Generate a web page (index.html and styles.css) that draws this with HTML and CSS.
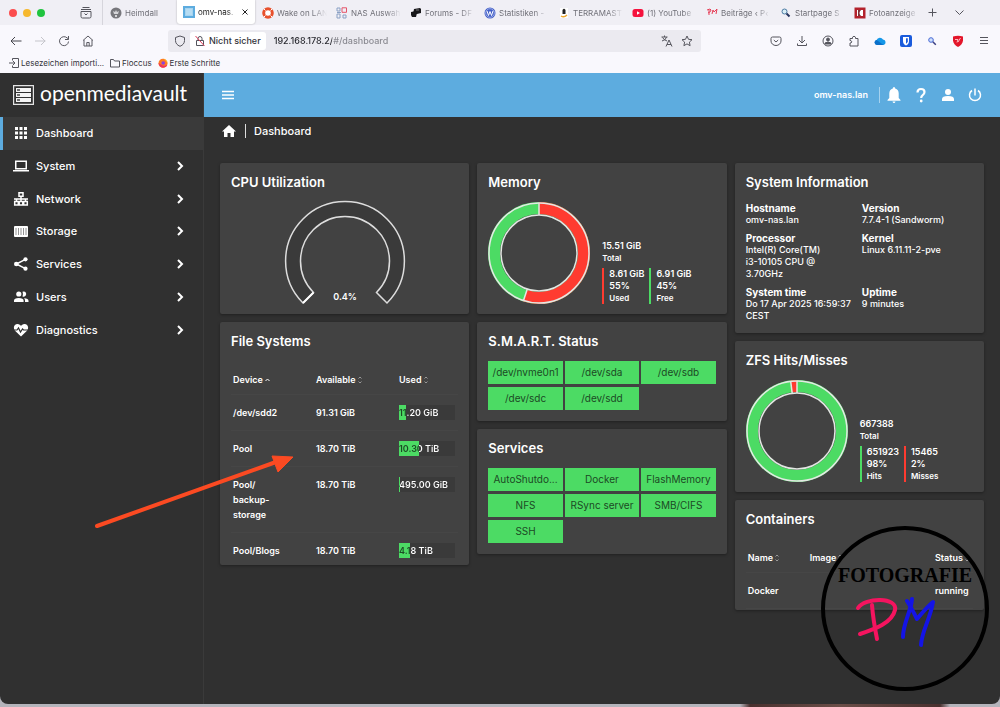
FILE: index.html
```html
<!DOCTYPE html>
<html lang="de">
<head>
  <meta charset="UTF-8">
  <meta name="viewport" content="width=device-width, initial-scale=1.0">
  <title>omv-nas.lan - Dashboard</title>
  <link rel="stylesheet" href="styles.css">
</head>
<body>
  <div class="window">

    <!-- Browser -->
    <div class="browser">
      <div class="tab-bar">
        <div class="lights"><span class="light red"></span><span class="light yellow"></span><span class="light green"></span></div>
        <button class="icon-btn view-btn" aria-label="Firefox View">
          <svg width="12" height="12" viewBox="0 0 12 12" fill="none" stroke="#55555d"><path d="M2.500.5h7M1 2.500h10M1 4.500h10v5a1.500 1.500 0 0 1-1.500 1.500h-7A1.500 1.500 0 0 1 1 9.500zM4.500 6.500l1.500 1.500 1.500-1.500"/></svg>
        </button>
        <div class="tabs">
          <a class="tab" href="#">
            <svg width="12" height="12" viewBox="0 0 12 12"><circle cx="6" cy="6" r="5.500" fill="#77777c"/><path d="M3 4l2 1 1-2 1 2 2-1-1 3H4zM5 8h2v2H5z" fill="#d5d5d8"/></svg>
            <span>Heimdall</span>
          </a>
          <a class="tab active" href="#">
            <svg width="12" height="12" viewBox="0 0 12 12"><path d="M0 0h12v12H0z" fill="#5dacdf"/><path d="M2 2h8v8H2z" fill="#a5d3ef"/><path d="M3 4h6M3 6h6M3 8h6" stroke="#c8e6f6"/></svg>
            <span>omv-nas.</span>
            <svg width="6" height="6" viewBox="0 0 6 6"><path d="M.5.5l5 5M5.500.5l-5 5" stroke="#222"/></svg>
          </a>
          <a class="tab" href="#">
            <svg width="12" height="12" viewBox="0 0 12 12"><circle cx="6" cy="6" r="4.300" fill="#fff" stroke="#e8502c" stroke-width="3"/><path d="M2 2l1.500 1.500M10 2L8.500 3.500M2 10l1.500-1.500M10 10L8.500 8.500" stroke="#fff"/></svg>
            <span>Wake on LAN</span>
          </a>
          <a class="tab" href="#">
            <svg width="12" height="12" viewBox="0 0 12 12" fill="none"><path d="M1 1h3v3H1zM1 7h3v4H1zM7 8h3v3H7zM1 5.500h4" stroke="#8aa0c4"/><path d="M6 .8h4.500v4.500H6z" stroke="#e4546a"/></svg>
            <span>NAS Auswah</span>
          </a>
          <a class="tab" href="#">
            <svg width="12" height="12" viewBox="0 0 12 12" fill="#17171a"><path d="M4 2l6-1 1 1v4l-4 1H3z"/><path d="M1 5l5-1 1 2-1 4H2l-1-2z"/><path d="M6 3h3" stroke="#777"/></svg>
            <span>Forums - DF</span>
          </a>
          <a class="tab" href="#">
            <svg width="12" height="12" viewBox="0 0 12 12"><circle cx="6" cy="6" r="5.500" fill="#4460c8"/><circle cx="6" cy="6" r="4.300" fill="none" stroke="#cfd6f6" stroke-width=".6"/><path d="M3 4l1.500 4.500L6 4.500l1.500 4L9 4" fill="none" stroke="#fff"/></svg>
            <span>Statistiken -</span>
          </a>
          <a class="tab" href="#">
            <svg width="12" height="12" viewBox="0 0 12 12"><path d="M2 1h8v10H2z" fill="#fff"/><path d="M4.500 7V3q1.500-2.500 3 0v4z" fill="#222"/><path d="M3 9q3 2 6-1" fill="none" stroke="#eea72b" stroke-width="1.500"/></svg>
            <span>TERRAMAST</span>
          </a>
          <a class="tab" href="#">
            <svg width="12" height="12" viewBox="0 0 12 12"><rect x=".5" y="2" width="11" height="8" rx="2.500" fill="#f5123d"/><path d="M5 4.300v3.400L8 6z" fill="#fff"/></svg>
            <span>(1) YouTube</span>
          </a>
          <a class="tab" href="#">
            <svg width="12" height="12" viewBox="0 0 12 12" fill="none" stroke="#e63d56"><path d="M1 3q4-2 4 0T2 6M3 3v5M6 7l1-4 1 2 3-3-1 5"/></svg>
            <span>Beiträge ‹ P‹</span>
          </a>
          <a class="tab" href="#">
            <svg width="12" height="12" viewBox="0 0 12 12" fill="none"><circle cx="4.500" cy="4.500" r="2.500" fill="#d9eef5" stroke="#4d7ca4"/><path d="M6.500 6.500l3 3" stroke="#26355e" stroke-width="2"/></svg>
            <span>Startpage S</span>
          </a>
          <a class="tab" href="#">
            <svg width="12" height="12" viewBox="0 0 12 12"><path d="M.5.5h11v11H.5z" fill="#b3222c"/><path d="M3 3h6v6H3z" fill="#fff"/><path d="M7 3q-3 3 0 6H4V3z" fill="#7c3036"/></svg>
            <span>Fotoanzeige</span>
          </a>
        </div>
        <button class="icon-btn" aria-label="Neuer Tab"><svg width="9" height="9" viewBox="0 0 9 9" stroke="#55555d"><path d="M4.500.5v8M.5 4.500h8"/></svg></button>
        <button class="icon-btn list-btn" aria-label="Alle Tabs"><svg width="9" height="9" viewBox="0 0 9 9" fill="none" stroke="#55555d"><path d="M.5 2.500l4 4 4-4"/></svg></button>
      </div>

      <div class="nav-bar">
        <div class="nav-buttons">
          <button class="icon-btn" aria-label="Zurück"><svg width="12" height="12" viewBox="0 0 12 12" fill="none" stroke="#45454d"><path d="M1 6h10.500M5 2L1 6l4 4"/></svg></button>
          <button class="icon-btn" aria-label="Vor"><svg width="12" height="12" viewBox="0 0 12 12" fill="none" stroke="#c5c5cb"><path d="M1 6h10.500M7 2l4 4-4 4"/></svg></button>
          <button class="icon-btn" aria-label="Neu laden"><svg width="12" height="12" viewBox="0 0 12 12" fill="none" stroke="#5a5a62"><path d="M10.500 6.500A4.500 4.500 0 1 1 9 2.800l1.500 1.200"/><path d="M10.500 1v3.500H7"/></svg></button>
          <button class="icon-btn" aria-label="Startseite"><svg width="12" height="12" viewBox="0 0 12 12" fill="none" stroke="#5a5a62"><path d="M1 5.500L6 1l5 4.500M2 5v6h8V5M4.800 11V7.500h2.400V11"/></svg></button>
        </div>
        <div class="url-bar">
          <svg width="12" height="12" viewBox="0 0 12 12" fill="none" stroke="#55555d"><path d="M6 1l4.500 1.500v3Q10.500 9.500 6 11.300 1.500 9.500 1.500 5.500v-3z"/></svg>
          <button class="insecure">
            <svg width="10" height="12" viewBox="0 0 10 12" fill="none" stroke="#55555d"><path d="M1.500 5.500h7v5h-7zM3 5.500v-2a2 2 0 0 1 4 0v2"/><path d="M.5 1l9 10" stroke="#e0405c"/></svg>
            Nicht sicher
          </button>
          <input class="url" type="text" value="192.168.178.2/#/dashboard" aria-label="Adresse">
          <button class="icon-btn" aria-label="Übersetzen"><svg width="12" height="12" viewBox="0 0 12 12" fill="none" stroke="#55555d"><path d="M.5 2h6M3.500.5V2M1 6q4-1 4.500-4M1.500 2.500Q3 5 6 6M5 11.500L8 5l3 6.500M6 9.500h4"/></svg></button>
          <button class="icon-btn" aria-label="Lesezeichen"><svg width="12" height="12" viewBox="0 0 12 12" fill="none" stroke="#55555d" stroke-linejoin="round"><path d="M6 1l1.500 3.300 3.500.4-2.600 2.400.7 3.600L6 8.900l-3.100 1.800.7-3.600L1 4.700l3.500-.4z"/></svg></button>
        </div>
        <div class="extensions">
          <button class="icon-btn" aria-label="Pocket"><svg width="12" height="12" viewBox="0 0 12 12" fill="none" stroke="#55555d"><path d="M2.500 2h7a1.500 1.500 0 0 1 1.500 1.500V6a5 4.500 0 0 1-10 0V3.500A1.500 1.500 0 0 1 2.500 2zM3.800 5L6 7l2.200-2"/></svg></button>
          <button class="icon-btn" aria-label="Downloads"><svg width="12" height="12" viewBox="0 0 12 12" fill="none" stroke="#55555d"><path d="M6 1v7M3 5l3 3 3-3M1.500 8.500v2h9v-2"/></svg></button>
          <button class="icon-btn" aria-label="Konto"><svg width="12" height="12" viewBox="0 0 12 12" fill="none" stroke="#55555d"><circle cx="6" cy="6" r="5"/><circle cx="6" cy="4.500" r="1.500" fill="#55555d"/><path d="M3 9V8q3-2 6 0v1z" fill="#55555d"/></svg></button>
          <button class="icon-btn" aria-label="Erweiterungen"><svg width="12" height="12" viewBox="0 0 12 12" fill="none" stroke="#55555d"><path d="M2 11V8h1q1.500-1.200 0-2.400H2V3.500h2.500V2.200q1.500-2 3 0v1.300H10V11z"/></svg></button>
          <button class="icon-btn" aria-label="Cloud"><svg width="12" height="12" viewBox="0 0 12 12"><path d="M3 10a2.600 2.600 0 0 1-.4-5A3.600 3.600 0 0 1 9 4.500 2.800 2.800 0 0 1 9.500 10z" fill="#1597e8"/><path d="M2.600 5l6.900 5H3q-2.500-.4-2.500-2.500T2.600 5z" fill="#0b6fc9"/></svg></button>
          <button class="icon-btn" aria-label="Passwörter"><svg width="12" height="12" viewBox="0 0 12 12"><rect width="12" height="12" rx="2" fill="#1a5bdc"/><path d="M3 2h6v4q0 3-3 4.500Q3 9 3 6z" fill="#fff"/><path d="M6 3.300h1.800v3Q7.500 8 6 8.700z" fill="#1a5bdc"/></svg></button>
          <button class="icon-btn" aria-label="Suche"><svg width="12" height="12" viewBox="0 0 12 12" fill="none"><circle cx="5" cy="5" r="2.300" fill="#cfe0fb" stroke="#4668d5"/><path d="M6.800 6.800l3 3" stroke="#3b3f82" stroke-width="1.500"/></svg></button>
          <button class="icon-btn" aria-label="Schutz"><svg width="12" height="12" viewBox="0 0 12 12"><path d="M1 1.500Q6 0 11 1.500v4Q10.500 9.500 6 12 1.500 9.500 1 5.500z" fill="#e3162b"/><path d="M3 4.500h3l-1 3M8.500 3L6 7" fill="none" stroke="#ffb9bf"/></svg></button>
          <button class="icon-btn" aria-label="Menü"><svg width="12" height="12" viewBox="0 0 12 12" stroke="#55555d"><path d="M2 2.500h8M2 5.500h8M2 8.500h8"/></svg></button>
        </div>
      </div>

      <div class="bookmarks">
        <a href="#"><svg width="10" height="10" viewBox="0 0 10 10" fill="none" stroke="#55555d"><path d="M3.500 2.500v-2h6v9h-6v-2M0 5h6M4 3l2 2-2 2"/></svg>Lesezeichen importi...</a>
        <a href="#"><svg width="10" height="10" viewBox="0 0 10 10" fill="none" stroke="#55555d"><path d="M.5 1.500h3l1 1.500h5v6h-9z"/></svg>Floccus</a>
        <a href="#"><svg width="10" height="10" viewBox="0 0 10 10"><circle cx="5" cy="5.200" r="4.500" fill="#ff7b22"/><path d="M5 .7a4.500 4.500 0 0 1 4.500 5Q8 1.500 5 .7z" fill="#ffd13a"/><path d="M.5 5Q1 9 5 9.700q4-.7 4.300-3Q6 9 3 6.500z" fill="#f0325f"/><circle cx="5.200" cy="5" r="1.800" fill="#8a42e0"/></svg>Erste Schritte</a>
      </div>
    </div>

    <!-- Anwendung -->
    <div class="app">
      <aside class="sidebar">
        <a class="brand" href="#">
          <svg width="21" height="20" viewBox="0 0 21 20"><path d="M.6.6h19.800v18.800H.6z" fill="none" stroke="#e4e4e4" stroke-width="1.200"/><path d="M3 3h15v4H3zM3 8h15v4H3zM3 13h15v4H3z" fill="#f4f4f4"/><path d="M4 5h3M4 10h3M4 15h3" stroke="#444" stroke-width="1.500"/></svg>
          <span>openmediavault</span>
        </a>
        <nav class="menu">
          <a class="menu-item active" href="#"><svg viewBox="0 0 16 16"><path d="M2 2h3v3H2zM6.500 2h3v3h-3zM11 2h3v3h-3zM2 6.500h3v3H2zM6.500 6.500h3v3h-3zM11 6.500h3v3h-3zM2 11h3v3H2zM6.500 11h3v3h-3zM11 11h3v3h-3z"/></svg><span>Dashboard</span></a>
          <a class="menu-item" href="#"><svg viewBox="0 0 16 16"><path d="M2 2.500h12v9H2zM3.500 4v6h9V4zM0 12h16v1.500H0z" fill-rule="evenodd"/></svg><span>System</span><svg class="chevron" viewBox="0 0 8 10"><path d="M2 1l4 4-4 4"/></svg></a>
          <a class="menu-item" href="#"><svg viewBox="0 0 16 16" class="line"><path d="M6 1.700h4v3.600H6zM1.700 10.500h3.600v3.600H1.700zM10.700 10.500h3.600v3.600h-3.600zM6.200 10.500h3.600v3.600H6.200zM8 5.300v5.200M1 8h14M3.500 8v2.500M12.500 8v2.500"/></svg><span>Network</span><svg class="chevron" viewBox="0 0 8 10"><path d="M2 1l4 4-4 4"/></svg></a>
          <a class="menu-item" href="#"><svg viewBox="0 0 16 16"><rect x="1" y="3" width="14" height="11" rx="1"/><path d="M5.500 5v7M8 5v7M10.500 5v7M13 5v7M3 5v7" stroke="#777" stroke-width=".8"/></svg><span>Storage</span><svg class="chevron" viewBox="0 0 8 10"><path d="M2 1l4 4-4 4"/></svg></a>
          <a class="menu-item" href="#"><svg viewBox="0 0 16 16"><circle cx="12.500" cy="3.300" r="2.100"/><circle cx="3.300" cy="8" r="2.300"/><circle cx="12.500" cy="12.700" r="2.100"/><path d="M12.500 3.300L3.300 8l9.200 4.700" fill="none" stroke="#fff" stroke-width="1.500"/></svg><span>Services</span><svg class="chevron" viewBox="0 0 8 10"><path d="M2 1l4 4-4 4"/></svg></a>
          <a class="menu-item" href="#"><svg viewBox="0 0 16 16"><circle cx="5.800" cy="5" r="2.600"/><path d="M1 13v-1.500Q1 9 5.800 9t4.800 2.500V13zM9.500 2.700a2.600 2.600 0 1 1 0 4.700q1-2.300 0-4.700zM11 9.200q4.500.3 4.500 2.500V13H12v-1.500q0-1.300-1-2.300z"/></svg><span>Users</span><svg class="chevron" viewBox="0 0 8 10"><path d="M2 1l4 4-4 4"/></svg></a>
          <a class="menu-item" href="#"><svg viewBox="0 0 16 16"><path d="M8 14.500L2 8.800C-.5 5.500 1.500 2 4.500 2 6.300 2 7.400 3 8 4c.6-1 1.700-2 3.500-2 3 0 5 3.500 2.500 6.800z"/><path d="M0 8h4l1.500-2 2 4 2-3 1 1H16" fill="none" stroke="#303030" stroke-width="1.200"/></svg><span>Diagnostics</span><svg class="chevron" viewBox="0 0 8 10"><path d="M2 1l4 4-4 4"/></svg></a>
        </nav>
      </aside>

      <main class="content">
        <header class="top-bar">
          <button class="icon-btn" aria-label="Navigation"><svg width="14" height="14" viewBox="0 0 14 14" stroke="#fff" stroke-width="1.500"><path d="M1 3.500h12M1 7h12M1 10.500h12"/></svg></button>
          <span class="host">omv-nas.lan</span>
          <div class="top-actions">
            <button class="icon-btn" aria-label="Benachrichtigungen"><svg viewBox="0 0 16 16"><path d="M8 0q1.200 0 1.200 1.500 3.500.9 3.500 5V11l1.800 2v.8h-13V13l1.800-2V6.500q0-4.100 3.500-5Q6.800 0 8 0zM6.500 14.500h3Q9.200 16 8 16t-1.500-1.500z"/></svg></button>
            <button class="icon-btn" aria-label="Hilfe"><svg viewBox="0 0 16 16"><path d="M4.500 5.500Q4.500 2 8 2t3.500 3Q11.500 7 9.500 8.300 8.200 9.200 8.200 11" fill="none" stroke="#fff" stroke-width="2.200"/><circle cx="8.200" cy="14" r="1.400"/></svg></button>
            <button class="icon-btn" aria-label="Benutzer"><svg viewBox="0 0 16 16"><circle cx="8" cy="5" r="3"/><path d="M2 14v-2q0-3 6-3t6 3v2z"/></svg></button>
            <button class="icon-btn" aria-label="Ausschalten"><svg viewBox="0 0 16 16" class="line"><path d="M5 3.500a5.500 5.500 0 1 0 6 0M8 1.500v7"/></svg></button>
          </div>
        </header>

        <div class="breadcrumb">
          <a href="#" aria-label="Start"><svg width="14" height="14" viewBox="0 0 14 14"><path d="M7 1l7 6.500h-2V13H8.500V9h-3v4H2V7.500H0z" fill="#fff"/></svg></a>
          <span>Dashboard</span>
        </div>

        <div class="grid">
          <div class="column">
            <section class="card card-chart">
              <h2>CPU Utilization</h2>
              <svg class="gauge" width="122" height="105" viewBox="0 0 122 105">
                <path d="M19 103A59.400 59.400 0 1 1 103 103L92.500 92.500A44.500 44.500 0 1 0 29.500 92.500z"/>
                <path class="gauge-value" d="M19 103l10.500-10.500"/>
                <text x="61" y="100">0.4%</text>
              </svg>
            </section>

            <section class="card card-files">
              <h2>File Systems</h2>
              <table class="data-table">
                <thead>
                  <tr>
                    <th><button>Device<svg class="asc" width="5" height="4" viewBox="0 0 5 4"><path d="M.5 3l2-2 2 2"/></svg></button></th>
                    <th><button>Available<svg width="4" height="8" viewBox="0 0 4 8"><path d="M.5 2.500L2 1l1.500 1.500M.5 5.500L2 7l1.500-1.500"/></svg></button></th>
                    <th><button>Used<svg width="4" height="8" viewBox="0 0 4 8"><path d="M.5 2.500L2 1l1.500 1.500M.5 5.500L2 7l1.500-1.500"/></svg></button></th>
                  </tr>
                </thead>
                <tbody>
                  <tr><td>/dev/sdd2</td><td>91.31 GiB</td><td><div class="usage" style="--used: 12%"><span>11.20 GiB</span></div></td></tr>
                  <tr><td>Pool</td><td>18.70 TiB</td><td><div class="usage" style="--used: 36%"><span>10.30 TiB</span></div></td></tr>
                  <tr><td>Pool/<br>backup-<br>storage</td><td>18.70 TiB</td><td><div class="usage" style="--used: 2%"><span>495.00 GiB</span></div></td></tr>
                  <tr><td>Pool/Blogs</td><td>18.70 TiB</td><td><div class="usage" style="--used: 19%"><span>4.18 TiB</span></div></td></tr>
                </tbody>
              </table>
            </section>
          </div>

          <div class="column">
            <section class="card card-chart">
              <h2>Memory</h2>
              <div class="chart">
                <svg class="donut" width="102" height="102" viewBox="0 0 102 102">
                  <circle class="good" cx="51" cy="51" r="45"/>
                  <circle class="bad" cx="51" cy="51" r="45" pathLength="100" stroke-dasharray="55 45"/>
                  <circle class="outline" cx="51" cy="51" r="50"/>
                  <circle class="outline" cx="51" cy="51" r="38"/>
                  <path class="outline" d="M89 51h12M14.900 39.300L3.500 35.500"/>
                </svg>
                <div class="legend">
                  <p>15.51 GiB</p>
                  <small>Total</small>
                  <div class="shares">
                    <div class="share bad-share"><p>8.61 GiB</p><p>55%</p><small>Used</small></div>
                    <div class="share good-share"><p>6.91 GiB</p><p>45%</p><small>Free</small></div>
                  </div>
                </div>
              </div>
            </section>

            <section class="card">
              <h2>S.M.A.R.T. Status</h2>
              <div class="tiles">
                <div class="tile">/dev/nvme0n1</div>
                <div class="tile">/dev/sda</div>
                <div class="tile">/dev/sdb</div>
                <div class="tile">/dev/sdc</div>
                <div class="tile">/dev/sdd</div>
              </div>
            </section>

            <section class="card">
              <h2>Services</h2>
              <div class="tiles">
                <div class="tile">AutoShutdo...</div>
                <div class="tile">Docker</div>
                <div class="tile">FlashMemory</div>
                <div class="tile">NFS</div>
                <div class="tile">RSync server</div>
                <div class="tile">SMB/CIFS</div>
                <div class="tile">SSH</div>
              </div>
            </section>
          </div>

          <div class="column">
            <section class="card card-info">
              <h2>System Information</h2>
              <dl class="info">
                <div><dt>Hostname</dt><dd>omv-nas.lan</dd></div>
                <div><dt>Version</dt><dd>7.7.4-1 (Sandworm)</dd></div>
                <div><dt>Processor</dt><dd>Intel(R) Core(TM)<br>i3-10105 CPU @<br>3.70GHz</dd></div>
                <div><dt>Kernel</dt><dd>Linux 6.11.11-2-pve</dd></div>
                <div><dt>System time</dt><dd>Do 17 Apr 2025 16:59:37 CEST</dd></div>
                <div><dt>Uptime</dt><dd>9 minutes</dd></div>
              </dl>
            </section>

            <section class="card card-chart">
              <h2>ZFS Hits/Misses</h2>
              <div class="chart">
                <svg class="donut" width="102" height="102" viewBox="0 0 102 102">
                  <circle class="good" cx="51" cy="51" r="45"/>
                  <circle class="bad" cx="51" cy="51" r="45" pathLength="100" stroke-dasharray="2 98" stroke-dashoffset="2"/>
                  <circle class="outline" cx="51" cy="51" r="50"/>
                  <circle class="outline" cx="51" cy="51" r="38"/>
                  <path class="outline" d="M89 51h12M88.700 46.200l11.900-1.500"/>
                </svg>
                <div class="legend">
                  <p>667388</p>
                  <small>Total</small>
                  <div class="shares">
                    <div class="share good-share"><p>651923</p><p>98%</p><small>Hits</small></div>
                    <div class="share bad-share"><p>15465</p><p>2%</p><small>Misses</small></div>
                  </div>
                </div>
              </div>
            </section>

            <section class="card card-containers">
              <h2>Containers</h2>
              <table class="data-table">
                <thead>
                  <tr>
                    <th><button>Name<svg width="4" height="8" viewBox="0 0 4 8"><path d="M.5 2.500L2 1l1.500 1.500M.5 5.500L2 7l1.500-1.500"/></svg></button></th>
                    <th><button>Image<svg width="4" height="8" viewBox="0 0 4 8"><path d="M.5 2.500L2 1l1.500 1.500M.5 5.500L2 7l1.500-1.500"/></svg></button></th>
                    <th><button>Status<svg width="4" height="8" viewBox="0 0 4 8"><path d="M.5 2.500L2 1l1.500 1.500M.5 5.500L2 7l1.500-1.500"/></svg></button></th>
                  </tr>
                </thead>
                <tbody>
                  <tr><td>Docker</td><td></td><td>running</td></tr>
                </tbody>
              </table>
            </section>
          </div>
        </div>
      </main>
    </div>
  </div>
  <div class="desktop"></div>

  <svg class="arrow" width="202" height="78" viewBox="0 0 202 78">
    <path d="M3 73L182 9" stroke="#fb4a22" stroke-width="4" stroke-linecap="round"/>
    <path d="M178 3l21 1-15 15z" fill="#fb4a22" stroke="#fb4a22" stroke-linejoin="round"/>
  </svg>

  <div class="watermark">
    <span>FOTOGRAFIE</span>
    <svg width="80" height="52" viewBox="0 0 80 52" fill="none" stroke-linecap="round" stroke-linejoin="round" aria-label="PM">
      <path d="M3 12C10 1 43 1 40 14 37 27 20 33 5 38" stroke="#f5145f" stroke-width="4"/>
      <path d="M17 9C18 22 20 33 22 43" stroke="#f5145f" stroke-width="4"/>
      <path d="M57 3C56 16 48 27 48 41" stroke="#1414e6" stroke-width="4"/>
      <path d="M52 5C56 11 59 17 62 23 67 17 72 11 78 6 75 24 67 34 66 49" stroke="#1414e6" stroke-width="4"/>
    </svg>
  </div>
</body>
</html>
```
FILE: styles.css
```css
:root {
  --blue: #5dacdf;
  --dark: #303030;
  --card: #424242;
  --green: #4cdb64;
  --red: #ff3b30;
  --chrome: #f9f8fd;
  --chrome-dark: #f0eff5;
}

* {
  box-sizing: border-box;
}

body {
  margin: 0;
  min-height: 100vh;
  display: flex;
  flex-direction: column;
  position: relative;
  background: #b4b4bb;
  color: #fff;
  font-family: Inter, "Liberation Sans", sans-serif;
  font-size: 9px;
  font-weight: 600;
  line-height: 12px;
  overflow-x: hidden;
}

a {
  color: inherit;
  text-decoration: none;
}

button {
  border: none;
  padding: 0;
  background: none;
  color: inherit;
  font: inherit;
  cursor: pointer;
}

svg {
  display: block;
  flex: none;
}

h2, p, dl, dd {
  margin: 0;
}

.window {
  flex: 1;
  display: flex;
  flex-direction: column;
  overflow: hidden;
  border-radius: 0 0 8px 8px;
  background: var(--dark);
}

.desktop {
  height: 3px;
  background: linear-gradient(90deg, transparent 74%, #49302e 75%, #6b4e48 84%, #49302e 94%, transparent 95%);
}

.icon-btn {
  display: flex;
  align-items: center;
  justify-content: center;
}

/* Browser */

.browser {
  background: var(--chrome);
  color: #33333a;
  font-weight: 400;
}

.tab-bar {
  display: flex;
  align-items: center;
  height: 25px;
  padding: 0 36px 0 9px;
  background: var(--chrome-dark);
}

.lights {
  display: flex;
  gap: 6px;
}

.light {
  width: 8px;
  height: 8px;
  border-radius: 50%;
}

.light.red { background: #fb4d4e; }
.light.yellow { background: #f6b82e; }
.light.green { background: #20c43f; }

.view-btn {
  height: 25px;
  margin-left: 24px;
  padding: 0 10px 0 11px;
  border-right: 1px solid #d6d5dc;
}

.tabs {
  flex: 1;
  display: flex;
  min-width: 0;
  margin-right: 7px;
}

.tab {
  flex: 1 1 0;
  min-width: 0;
  display: flex;
  align-items: center;
  gap: 3px;
  height: 25px;
  padding: 0 2px 0 7px;
  color: #707078;
  font-size: 8px;
}

.tab span {
  flex: 1;
  min-width: 0;
  overflow: hidden;
  white-space: nowrap;
  mask-image: linear-gradient(90deg, #000 70%, transparent);
}

.tab.active {
  height: 24px;
  padding: 0 7px 0 6px;
  background: #fff;
  border-radius: 0 0 3px 3px;
  box-shadow: 0 0 2px rgba(0, 0, 0, 0.3);
  color: #222;
}

.list-btn {
  margin-left: 18px;
}

.nav-bar {
  display: flex;
  align-items: center;
  height: 31px;
  padding: 0 10px;
}

.nav-buttons {
  display: flex;
  gap: 12px;
}

.url-bar {
  flex: 1;
  display: flex;
  align-items: center;
  gap: 8px;
  height: 22px;
  margin: 0 69px 0 74px;
  padding: 0 8px 0 6px;
  border-radius: 3px;
  background: #ebeaf0;
}

.insecure {
  display: flex;
  align-items: center;
  gap: 4px;
  height: 18px;
  margin-left: -4px;
  padding: 0 5px;
  border-radius: 3px;
  background: #fff;
  font-weight: 500;
}

.url {
  flex: 1;
  min-width: 0;
  border: none;
  padding: 0;
  outline: none;
  background: linear-gradient(90deg, #26262c 58px, #85858c 58px);
  background-clip: text;
  -webkit-text-fill-color: transparent;
  font: inherit;
  font-weight: 500;
}

.extensions {
  display: flex;
  gap: 14px;
}

.bookmarks {
  display: flex;
  align-items: center;
  gap: 6px;
  height: 17px;
  padding: 0 9px 3px;
  font-size: 8px;
}

.bookmarks a {
  display: flex;
  align-items: center;
  gap: 2px;
}

/* Sidebar */

.app {
  flex: 1;
  display: flex;
}

.sidebar {
  width: 204px;
  border-right: 1px solid #3a3a3a;
}

.brand {
  display: flex;
  align-items: center;
  gap: 6px;
  height: 44px;
  padding-left: 13px;
}

.brand span {
  padding-bottom: 4px;
  font-family: Lato, sans-serif;
  font-size: 21px;
  font-weight: 400;
  line-height: 26px;
}

.menu {
  display: grid;
  grid-auto-rows: 1fr;
  height: 229px;
}

.menu-item {
  display: flex;
  align-items: center;
  gap: 7px;
  padding: 0 19px 0 10px;
  border-left: 3px solid transparent;
  font-size: 11px;
  font-weight: 500;
}

.menu-item.active {
  border-left-color: var(--blue);
  background: #3a3a3a;
}

.menu-item svg {
  width: 16px;
  height: 16px;
  fill: #fff;
}

.menu-item .chevron {
  width: 8px;
  height: 10px;
  margin-left: auto;
  fill: none;
  stroke: #fff;
  stroke-width: 2;
}

.menu-item svg.line, .top-actions svg.line {
  fill: none;
  stroke: #fff;
  stroke-width: 1.5;
}

/* Content */

.content {
  flex: 1;
  min-width: 0;
}

.top-bar {
  display: flex;
  align-items: center;
  height: 44px;
  padding: 0 17px;
  background: var(--blue);
}

.host {
  margin-left: auto;
  padding-right: 11px;
  border-right: 1px solid #a5d2ef;
  line-height: 16px;
}

.top-actions {
  display: flex;
  gap: 11px;
  margin-left: 6px;
}

.top-actions svg {
  width: 16px;
  height: 16px;
  fill: #fff;
}

.breadcrumb {
  display: flex;
  align-items: center;
  gap: 9px;
  height: 28px;
  padding-left: 18px;
  font-size: 11px;
  font-weight: 500;
}

.breadcrumb span {
  padding-left: 8px;
  border-left: 1px solid #ddd;
  line-height: 14px;
}

.grid {
  display: grid;
  grid-template-columns: repeat(3, 1fr);
  gap: 8px;
  padding: 18px 16px;
}

.column {
  display: flex;
  flex-direction: column;
  gap: 8px;
  min-width: 0;
}

.card {
  padding: 11px;
  overflow: hidden;
  border-radius: 2px;
  background: var(--card);
  box-shadow: 0 1px 3px rgba(0, 0, 0, 0.35);
}

.card h2 {
  margin-bottom: 11px;
  font-size: 13px;
  font-weight: 600;
  line-height: 17px;
}

.card-chart {
  height: 151px;
}

.card-files {
  height: 243px;
}

.card-info {
  height: 170px;
}

.card-containers {
  height: 110px;
}

.gauge {
  margin: -2px auto 0;
}

.gauge path {
  fill: #3a3a3a;
  stroke: #ddd;
  stroke-width: 1.5;
}

.gauge .gauge-value {
  stroke: #fff;
  stroke-width: 2;
}

.gauge text {
  fill: #fff;
  text-anchor: middle;
}

.chart {
  display: flex;
  align-items: flex-end;
  gap: 12px;
}

.donut {
  fill: none;
  stroke-width: 12;
  transform: rotate(-90deg);
}

.donut .good { stroke: var(--green); }
.donut .bad { stroke: var(--red); }

.donut .outline {
  stroke: #e3e8e3;
  stroke-width: 1.5;
}

.legend small {
  display: block;
  font-size: 8px;
  line-height: 12px;
}

.shares {
  display: flex;
  gap: 5px;
  margin-top: 4px;
}

.share {
  padding-left: 5px;
  border-left: 2px solid;
}

.good-share { border-color: var(--green); }
.bad-share { border-color: var(--red); }

.tiles {
  display: grid;
  grid-template-columns: repeat(3, 1fr);
  gap: 3px 2px;
}

.tile {
  overflow: hidden;
  background: var(--green);
  color: #1c4a25;
  font-size: 10px;
  font-weight: 400;
  line-height: 23px;
  text-align: center;
  white-space: nowrap;
}

.info {
  display: grid;
  grid-template-columns: 1fr 1fr;
  gap: 6px 5px;
}

.info dt {
  font-size: 10px;
  font-weight: 700;
}

.info dd {
  font-weight: 500;
}

.data-table {
  width: 100%;
  border-collapse: collapse;
  table-layout: fixed;
  line-height: 15px;
}

.data-table th, .data-table td {
  padding: 10px 0 10px 2px;
  border-bottom: 1px solid #464646;
  text-align: left;
  vertical-align: top;
}

.data-table th {
  padding: 11px 0 7px 2px;
  font-weight: 600;
}

.data-table button {
  display: flex;
  align-items: center;
  gap: 2px;
}

.data-table button svg {
  fill: none;
  stroke: #999;
}

.data-table button .asc {
  stroke: #fff;
}

.card-files th:nth-child(-n+2) { width: 83px; }
.card-containers th:nth-child(1) { width: 62px; }
.card-containers th:nth-child(3) { width: 40px; }

.usage {
  width: 56px;
  background: linear-gradient(90deg, var(--green) var(--used), #3a3a3a var(--used));
}

.usage span {
  display: block;
  background: linear-gradient(90deg, #1c4a25 var(--used), #fff var(--used));
  background-clip: text;
  color: transparent;
}

/* Overlays */

.arrow {
  position: absolute;
  left: 94px;
  top: 453px;
}

.watermark {
  position: absolute;
  left: 821px;
  top: 526px;
  display: flex;
  flex-direction: column;
  align-items: center;
  width: 168px;
  height: 165px;
  padding-top: 33px;
  border: 4px solid #000;
  border-radius: 50%;
  color: #000;
}

.watermark span {
  font-family: "Liberation Serif", serif;
  font-size: 20px;
  font-weight: 700;
  line-height: 24px;
}

.watermark svg {
  margin: 9px 20px 0 0;
}
```
